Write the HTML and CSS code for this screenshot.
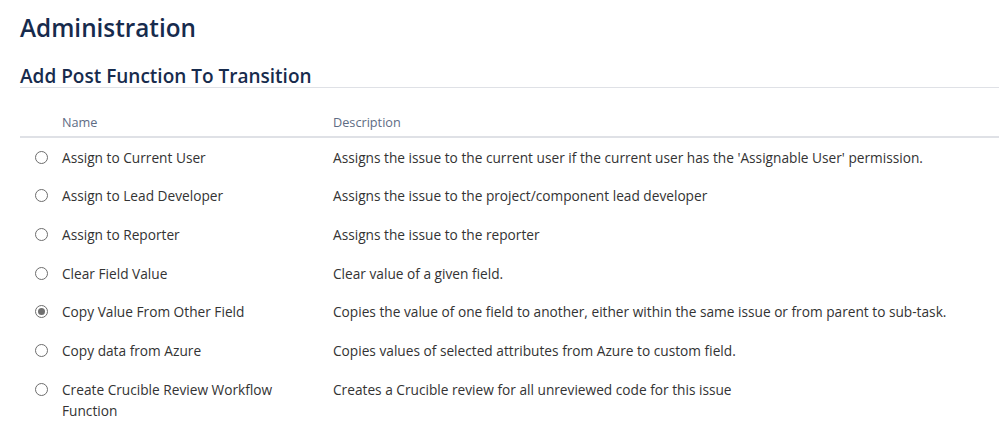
FILE: index.html
```html
<!DOCTYPE html>
<html lang="en">
<head>
<meta charset="utf-8">
<title>Administration</title>
<link rel="stylesheet" href="styles.css">
</head>
<body>
<div class="page">
  <h1 class="title">Administration</h1>
  <h2 class="subtitle">Add Post Function To Transition</h2>
  <table class="functions">
    <thead>
      <tr>
        <th class="col-radio"></th>
        <th class="col-name">Name</th>
        <th class="col-desc">Description</th>
      </tr>
    </thead>
    <tbody>
      <tr>
        <td class="col-radio"><span class="radio"></span></td>
        <td class="col-name">Assign to Current User</td>
        <td class="col-desc">Assigns the issue to the current user if the current user has the 'Assignable User' permission.</td>
      </tr>
      <tr>
        <td class="col-radio"><span class="radio"></span></td>
        <td class="col-name">Assign to Lead Developer</td>
        <td class="col-desc">Assigns the issue to the project/component lead developer</td>
      </tr>
      <tr>
        <td class="col-radio"><span class="radio"></span></td>
        <td class="col-name">Assign to Reporter</td>
        <td class="col-desc">Assigns the issue to the reporter</td>
      </tr>
      <tr>
        <td class="col-radio"><span class="radio"></span></td>
        <td class="col-name">Clear Field Value</td>
        <td class="col-desc">Clear value of a given field.</td>
      </tr>
      <tr>
        <td class="col-radio"><span class="radio checked"></span></td>
        <td class="col-name">Copy Value From Other Field</td>
        <td class="col-desc">Copies the value of one field to another, either within the same issue or from parent to sub-task.</td>
      </tr>
      <tr>
        <td class="col-radio"><span class="radio"></span></td>
        <td class="col-name">Copy data from Azure</td>
        <td class="col-desc">Copies values of selected attributes from Azure to custom field.</td>
      </tr>
      <tr>
        <td class="col-radio"><span class="radio"></span></td>
        <td class="col-name">Create Crucible Review Workflow Function</td>
        <td class="col-desc">Creates a Crucible review for all unreviewed code for this issue</td>
      </tr>
    </tbody>
  </table>
</div>
</body>
</html>
```

FILE: styles.css
```css
* { box-sizing: border-box; }
html, body { margin: 0; padding: 0; background: #fff; }
body {
  font-family: "Open Sans", "Noto Sans", sans-serif;
  color: #333;
  font-size: 13.7px;
  overflow: hidden;
}
.page {
  padding: 0 0 0 20px;
  width: 1020px;
}
.title {
  margin: 0;
  padding-top: 12px;
  font-size: 24.3px;
  line-height: 32px;
  font-weight: 600;
  color: #172b4d;
}
.subtitle {
  margin: 22px 0 0;
  font-size: 19px;
  line-height: 21px;
  font-weight: 600;
  color: #172b4d;
  border-bottom: 1px solid #dfe1e6;
}
.functions {
  margin-top: 16px;
  width: 100%;
  border-collapse: collapse;
}
.functions th {
  text-align: left;
  font-weight: 400;
  font-size: 12.7px;
  line-height: 20px;
  color: #5e6c84;
  padding: 8px 10px 4px;
  border-bottom: 2px solid #dfe1e6;
}
.functions td {
  vertical-align: top;
  line-height: 21px;
  padding: 8.75px 10px 8.92px;
}
.functions .col-radio {
  width: 32px;
  padding-left: 15px;
  padding-right: 4px;
}
.functions .col-name {
  width: 271px;
}
.radio {
  display: block;
  width: 13px;
  height: 13px;
  margin-top: 4px;
  border: 1px solid #6d6d6d;
  border-radius: 50%;
  background: #fff;
  position: relative;
}
.radio.checked::after {
  content: "";
  position: absolute;
  left: 2px;
  top: 2px;
  width: 7px;
  height: 7px;
  border-radius: 50%;
  background: #6f6f6f;
}
```
